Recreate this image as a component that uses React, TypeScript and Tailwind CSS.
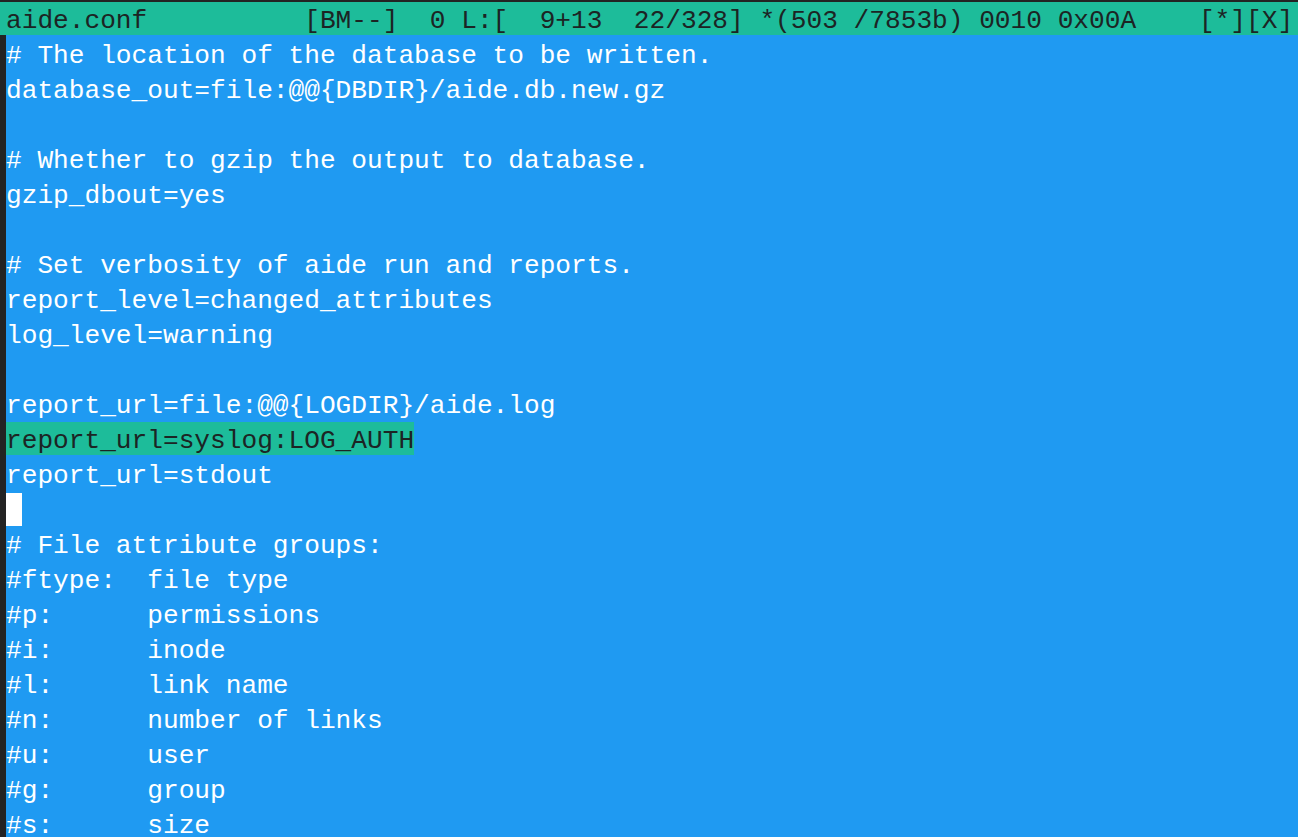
import React from "react";

const lines: string[] = [
  "# The location of the database to be written.",
  "database_out=file:@@{DBDIR}/aide.db.new.gz",
  "",
  "# Whether to gzip the output to database.",
  "gzip_dbout=yes",
  "",
  "# Set verbosity of aide run and reports.",
  "report_level=changed_attributes",
  "log_level=warning",
  "",
  "report_url=file:@@{LOGDIR}/aide.log",
  "@HL@report_url=syslog:LOG_AUTH",
  "report_url=stdout",
  "@CURSOR@",
  "# File attribute groups:",
  "#ftype:  file type",
  "#p:      permissions",
  "#i:      inode",
  "#l:      link name",
  "#n:      number of links",
  "#u:      user",
  "#g:      group",
  "#s:      size",
];

const status =
  "aide.conf" +
  " ".repeat(10) +
  "[BM--]  0 L:[  9+13  22/328] *(503 /7853b) 0010 0x00A" +
  " ".repeat(4) +
  "[*][X]";

export default function App() {
  return (
    <div
      className="w-[1298px] h-[837px] overflow-hidden bg-[#232323] pt-[2px] text-[26.16px]"
      style={{ fontFamily: '"Liberation Mono", "DejaVu Sans Mono", monospace' }}
    >
      <div className="h-[33px] leading-[38px] bg-[#1dbc9a] text-[#1c2424] pl-[6px] whitespace-pre">
        {status}
      </div>
      <div className="ml-[6px] h-[802px] bg-[#1f9af2] text-white">
        {lines.map((l, i) => {
          if (l === "@CURSOR@") {
            return (
              <div key={i} className="h-[35px] pt-[3px]">
                <div className="w-[16px] h-[33px] bg-white" />
              </div>
            );
          }
          if (l.startsWith("@HL@")) {
            return (
              <div key={i} className="h-[35px] flex items-end">
                <span className="h-[33px] leading-[38px] bg-[#1dbc9a] text-[#1c2424] whitespace-pre">
                  {l.slice(4)}
                </span>
              </div>
            );
          }
          return (
            <div key={i} className="h-[35px] leading-[42px] whitespace-pre">
              {l}
            </div>
          );
        })}
      </div>
    </div>
  );
}
